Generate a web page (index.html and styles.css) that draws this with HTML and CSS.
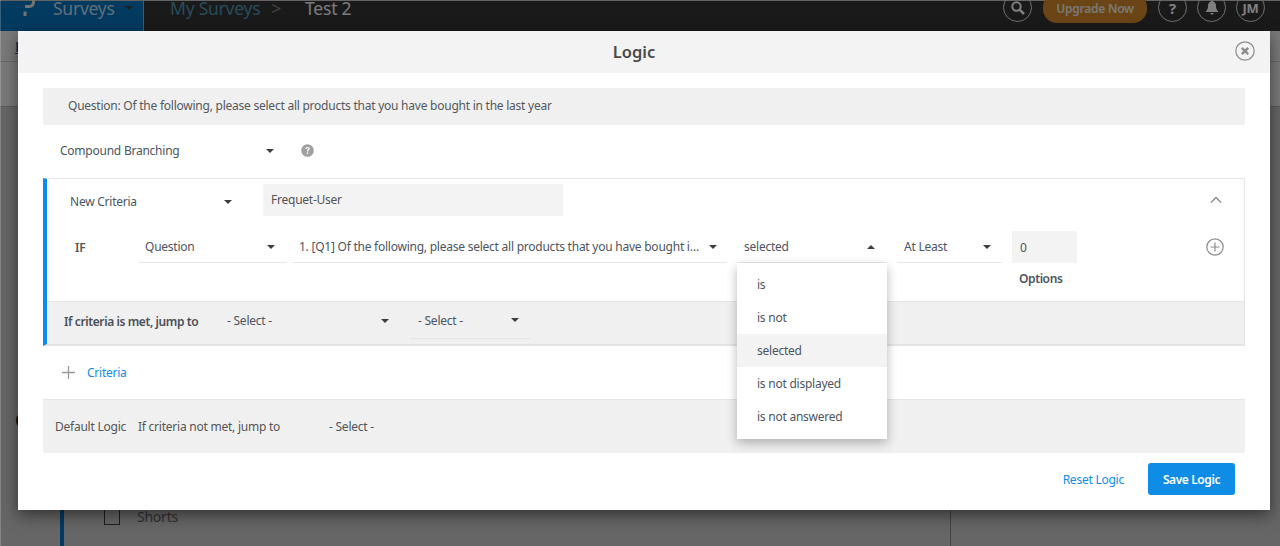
FILE: index.html
```html
<!DOCTYPE html>
<html lang="en">
<head>
<meta charset="utf-8">
<title>Logic</title>
<link rel="stylesheet" href="styles.css">
</head>
<body>
<div class="page">
  <header class="topbar">
    <div class="brand">
      <svg class="brand-mark" width="14" height="18" viewBox="0 0 14 18"><path d="M11.500 -3V2.500C11.500 5.500 9.800 7.500 7 7.500H3" fill="none" stroke="#e8e8e8" stroke-width="3"/><rect x="1.500" y="12.500" width="3" height="4.500" fill="#e8e8e8"/></svg>
      <span class="brand-name">Surveys</span>
      <span class="caret caret-large"></span>
    </div>
    <nav class="crumbs">
      <span class="crumb-link">My Surveys</span>
      <span class="crumb-sep">&gt;</span>
      <span class="crumb-current">Test 2</span>
    </nav>
    <div class="top-actions">
      <span class="round">
        <svg width="16" height="16" viewBox="0 0 16 16"><circle cx="6.500" cy="6.500" r="4.200" fill="none" stroke="#fff" stroke-width="2"/><path d="M9.800 9.800 14 14" stroke="#fff" stroke-width="2.600"/></svg>
      </span>
      <span class="upgrade">Upgrade Now</span>
      <span class="round round-text">?</span>
      <span class="round">
        <svg width="14" height="15" viewBox="0 0 14 15"><path d="M7 .5c.8 0 1.200.5 1.200 1.100C10.300 2.200 11 4 11 6c0 3 1 4.200 2.200 5.300v.7H.8v-.7C2 10.200 3 9 3 6c0-2 .7-3.800 2.800-4.400C5.800 1 6.200.5 7 .5zM5.400 13h3.200c0 1-.7 1.600-1.600 1.600S5.400 14 5.400 13z" fill="#fff"/></svg>
      </span>
      <span class="round round-text round-initials">JM</span>
    </div>
  </header>
  <div class="subnav"><span class="subnav-link">B</span></div>
  <div class="subband"></div>
  <div class="behind">
    <span class="behind-letter">Q</span>
    <div class="behind-card">
      <label class="behind-option"><span class="behind-box"></span>Shorts</label>
    </div>
  </div>

  <div class="scrim"></div>

  <section class="modal">
    <div class="modal-head">
      <h1 class="modal-title">Logic</h1>
      <span class="close-btn">
        <svg width="20" height="20" viewBox="0 0 20 20"><circle cx="10" cy="10" r="9.200" fill="none" stroke="#8d8d8d" stroke-width="1.200"/><path d="M6.800 6.800 13.200 13.200M13.200 6.800 6.800 13.200" stroke="#8d8d8d" stroke-width="2.400"/></svg>
      </span>
    </div>
    <div class="modal-body">
      <div class="question">Question: Of the following, please select all products that you have bought in the last year</div>
      <div class="branch-row">
        <span class="branch-select">Compound Branching<span class="caret"></span></span>
        <svg class="help" width="13" height="13" viewBox="0 0 13 13"><circle cx="6.500" cy="6.500" r="6.300" fill="#a0a0a0"/><path d="M4.300 5c.1-1.400 1-2.100 2.300-2.100s2.200.7 2.200 1.800c0 1.500-1.700 1.500-1.700 2.900H5.800c0-1.900 1.500-1.900 1.500-2.800 0-.4-.3-.7-.8-.7s-.8.300-.9.900zM5.800 8.500h1.400v1.500H5.800z" fill="#fff"/></svg>
      </div>

      <div class="criteria">
        <div class="criteria-main">
          <div class="criteria-head">
            <span class="name-select">New Criteria<span class="caret"></span></span>
            <span class="name-input">Frequet-User</span>
            <svg class="collapse" width="12" height="8" viewBox="0 0 12 8"><path d="M1 6.500 6 1.500l5 5" fill="none" stroke="#8a8a8a" stroke-width="1.300"/></svg>
          </div>
          <div class="if-row">
            <span class="if-label">IF</span>
            <span class="field field-type">Question<span class="caret"></span></span>
            <span class="field field-question"><span class="field-text">1. [Q1] Of the following, please select all products that you have bought in the last year</span><span class="caret"></span></span>
            <div class="op-wrap">
              <span class="field field-op">selected<span class="caret caret-up"></span></span>
              <ul class="menu">
                <li class="menu-item">is</li>
                <li class="menu-item">is not</li>
                <li class="menu-item menu-item-active">selected</li>
                <li class="menu-item">is not displayed</li>
                <li class="menu-item">is not answered</li>
              </ul>
            </div>
            <span class="field field-count">At Least<span class="caret"></span></span>
            <div class="count-col">
              <span class="count-input">0</span>
              <span class="count-label">Options</span>
            </div>
            <svg class="add-round" width="18" height="18" viewBox="0 0 18 18"><circle cx="9" cy="9" r="8.200" fill="none" stroke="#8a8a8a" stroke-width="1.200"/><path d="M9 4.500v9M4.500 9h9" stroke="#8a8a8a" stroke-width="1.200"/></svg>
          </div>
        </div>
        <div class="criteria-foot">
          <span class="jump-label">If criteria is met, jump to</span>
          <span class="jump-select jump-a">- Select -<span class="caret"></span></span>
          <span class="jump-select jump-b">- Select -<span class="caret"></span></span>
        </div>
      </div>

      <div class="add-row">
        <svg width="13" height="13" viewBox="0 0 13 13"><path d="M6.500 0v13M0 6.500h13" stroke="#999" stroke-width="1.300"/></svg>
        <span class="add-link">Criteria</span>
      </div>

      <div class="default-row">
        <span class="default-title">Default Logic</span>
        <span class="default-label">If criteria not met, jump to</span>
        <span class="default-select">- Select -</span>
      </div>

      <div class="actions">
        <span class="reset">Reset Logic</span>
        <span class="save">Save Logic</span>
      </div>
    </div>
  </section>
</div>
</body>
</html>
```
FILE: styles.css
```css
* { box-sizing: border-box; }
html, body { margin: 0; padding: 0; height: 100%; }
body {
  font-family: "Noto Sans", "Open Sans", sans-serif;
  font-size: 12px;
  letter-spacing: -0.24px;
  color: #4a4f57;
  overflow: hidden;
}
.page {
  position: relative;
  width: 1280px;
  height: 546px;
  overflow: hidden;
  background: #fff;
  display: flex;
  flex-direction: column;
}

/* page under the scrim */
.topbar {
  height: 31px;
  flex: none;
  display: flex;
  align-items: stretch;
  background: #343434;
  border-top: 1px solid #c8c8c8;
}
.brand {
  width: 144px;
  flex: none;
  display: flex;
  align-items: center;
  padding: 0 0 17px 22px;
  background: #0674c0;
  border-right: 1px solid #aaa;
  color: #c0dcf0;
  font-size: 17.5px;
}
.brand-mark { flex: none; margin-top: 1px; }
.brand-name { margin-left: 17px; }
.caret-large {
  border-top-color: #ddd;
  border-width: 5px 5px 0;
  margin-left: 10px;
}
.crumbs {
  display: flex;
  align-items: center;
  padding: 0 0 17px 26px;
  font-size: 17.5px;
}
.crumb-link { color: #5096b4; }
.crumb-sep { color: #888; margin-left: 11px; }
.crumb-current { color: #f4f4f4; margin-left: 24px; }
.top-actions {
  margin-left: auto;
  display: flex;
  align-items: flex-start;
  gap: 10px;
  padding-right: 15px;
  margin-top: -8px;
}
.round {
  width: 29px;
  height: 29px;
  border: 1px solid #e0e0e0;
  border-radius: 50%;
  display: flex;
  align-items: center;
  justify-content: center;
  color: #fff;
}
.round-text { font-weight: 700; font-size: 15px; }
.round-initials { font-size: 13px; }
.upgrade {
  width: 104px;
  height: 30px;
  background: #d68a2a;
  border-radius: 14px;
  color: #f4f0e8;
  font-weight: 600;
  display: flex;
  align-items: center;
  justify-content: center;
  margin: 0 1px;
}
.subnav {
  height: 31px;
  flex: none;
  background: #f4f4f4;
  border-bottom: 1px solid #cfcfcf;
  padding: 5px 0 0 15px;
}
.subnav-link {
  color: #0a6aa8;
  text-decoration: underline;
  font-size: 15px;
  font-weight: 700;
}
.subband {
  height: 45px;
  flex: none;
  background: #f4f4f4;
  border-bottom: 1px solid #b8b8b8;
}
.behind {
  flex: 1;
  position: relative;
  background: #cccccc;
  padding-left: 60px;
  display: flex;
}
.behind-letter {
  position: absolute;
  left: 15px;
  top: 301px;
  font-size: 18px;
  font-weight: 700;
  color: #222;
}
.behind-card {
  width: 891px;
  border-left: 4px solid #0674c8;
  border-right: 1px solid #888;
  display: flex;
  flex-direction: column;
  justify-content: flex-end;
  padding: 0 0 20px 40px;
}
.behind-option {
  display: flex;
  align-items: center;
  gap: 17px;
  font-size: 14px;
  color: #646464;
}
.behind-box { width: 16px; height: 16px; border: 1px solid #3c3c3c; }
.scrim {
  position: absolute;
  inset: 0;
  background: rgba(0, 0, 0, 0.5);
  border-left: 1px solid rgba(255, 255, 255, 0.2);
}

/* modal */
.modal {
  position: absolute;
  left: 18px;
  top: 31px;
  width: 1252px;
  height: 479px;
  background: #fff;
  box-shadow: 0 5px 15px rgba(0, 0, 0, 0.5);
  display: flex;
  flex-direction: column;
}
.modal-head {
  height: 42px;
  flex: none;
  background: #f3f3f3;
  display: flex;
  align-items: center;
  justify-content: center;
  position: relative;
  padding: 0 20px 2px 0;
}
.modal-title {
  margin: 0;
  font-size: 16.5px;
  font-weight: 600;
  letter-spacing: 0;
  color: #4a4a4a;
}
.close-btn {
  position: absolute;
  right: 15px;
  top: 10px;
  width: 20px;
  height: 20px;
}
.modal-body {
  flex: 1;
  padding: 15px 25px 0;
  display: flex;
  flex-direction: column;
}
.question {
  height: 37px;
  flex: none;
  background: #f0f0f0;
  padding: 0 0 2px 25px;
  display: flex;
  align-items: center;
  color: #54585e;
}
.branch-row {
  height: 53px;
  flex: none;
  display: flex;
  align-items: center;
  padding: 0 0 2px 17px;
}
.branch-select {
  width: 214px;
  display: flex;
  justify-content: space-between;
  align-items: center;
  color: #4c5561;
}
.help { margin-left: 27px; }
.caret {
  width: 0;
  height: 0;
  flex: none;
  border-style: solid;
  border-width: 4px 4px 0;
  border-color: #3d3d3d transparent transparent;
}
.caret-up { border-width: 0 4px 4px; border-color: transparent transparent #3d3d3d; }

.criteria {
  flex: none;
  height: 168px;
  border-left: 4px solid #0f8ce6;
  border-top: 1px solid #e6e6e6;
  border-right: 1px solid #e6e6e6;
  border-bottom: 2px solid #e4e4e4;
  display: flex;
  flex-direction: column;
}
.criteria-main {
  flex: 1;
  padding: 5px 0 0 0;
  position: relative;
}
.criteria-head {
  display: flex;
  align-items: flex-start;
  height: 32px;
  padding-left: 23px;
}
.name-select {
  width: 162px;
  height: 32px;
  display: flex;
  align-items: center;
  justify-content: space-between;
  padding: 3px 0 0;
  color: #4c5561;
}
.name-input {
  margin-left: 31px;
  width: 300px;
  height: 32px;
  background: #f3f3f3;
  padding: 0 8px 1px;
  display: flex;
  align-items: center;
  color: #555;
}
.collapse { margin-left: auto; margin-right: 22px; margin-top: 12px; }
.if-row {
  display: flex;
  align-items: flex-start;
  margin-top: 15px;
  padding-left: 28px;
  position: relative;
}
.if-label {
  width: 63px;
  height: 32px;
  display: flex;
  align-items: center;
  font-weight: 600;
  color: #555;
}
.field {
  height: 32px;
  display: flex;
  align-items: center;
  justify-content: space-between;
  border-bottom: 1px solid #e8e8e8;
  padding: 0 6px 0 7px;
  color: #4c5561;
  flex: none;
}
.field-type { width: 149px; margin-right: 5px; padding-right: 12px; }
.field-question { width: 435px; margin-right: 10px; gap: 6px; padding-right: 10px; }
.field-text {
  flex: 1;
  min-width: 0;
  white-space: nowrap;
  overflow: hidden;
  text-overflow: ellipsis;
}
.op-wrap { position: relative; margin-right: 10px; }
.field-op { width: 150px; padding-right: 12px; }
.field-count { width: 105px; margin-right: 10px; padding-right: 11px; }
.menu {
  list-style: none;
  margin: 0;
  padding: 5px 0 6px;
  position: absolute;
  left: 0;
  top: 32px;
  width: 150px;
  background: #fff;
  box-shadow: 0 4px 10px rgba(0, 0, 0, 0.28);
  z-index: 5;
}
.menu-item {
  height: 33px;
  padding-left: 20px;
  display: flex;
  align-items: center;
  color: #4c5561;
}
.menu-item-active { background: #f3f3f3; }
.count-col { width: 65px; display: flex; flex-direction: column; }
.count-input {
  height: 32px;
  background: #f3f3f3;
  padding-left: 8px;
  display: flex;
  align-items: center;
  color: #4c5561;
}
.count-label {
  margin-top: 7px;
  padding-left: 7px;
  font-weight: 600;
  letter-spacing: -0.4px;
  color: #4c5561;
}
.add-round { margin-left: 129px; margin-top: 7px; }
.criteria-foot {
  height: 43px;
  flex: none;
  background: #f0f0f0;
  border-top: 1px solid #e6e6e6;
  display: flex;
  align-items: flex-start;
  padding-left: 17px;
}
.jump-label {
  width: 163px;
  height: 38px;
  display: flex;
  align-items: center;
  font-weight: 600;
  letter-spacing: -0.4px;
  color: #4a4f57;
}
.jump-select {
  height: 37px;
  display: flex;
  align-items: center;
  justify-content: space-between;
  color: #4c5561;
}
.jump-a { width: 162px; margin-right: 21px; }
.jump-b {
  width: 120px;
  padding: 0 11px 0 8px;
  border-bottom: 1px solid #e4e4e4;
}
.add-row {
  height: 53px;
  flex: none;
  display: flex;
  align-items: center;
  gap: 12px;
  padding: 0 0 1px 19px;
}
.add-link { color: #0f8ce6; }
.default-row {
  height: 54px;
  flex: none;
  background: #f0f0f0;
  border-top: 1px solid #e6e6e6;
  display: flex;
  align-items: center;
  padding: 0 0 1px 12px;
  color: #555;
}
.default-title { width: 83px; }
.default-label { width: 191px; }
.default-select { color: #4c5561; }
.actions {
  flex: 1;
  display: flex;
  justify-content: flex-end;
  align-items: flex-start;
  padding: 10px 10px 0 0;
}
.reset {
  height: 32px;
  display: flex;
  align-items: center;
  color: #0f8ce6;
  margin-right: 24px;
}
.save {
  width: 87px;
  height: 32px;
  background: #0f8ce6;
  border-radius: 3px;
  color: #fff;
  font-weight: 600;
  letter-spacing: -0.4px;
  display: flex;
  align-items: center;
  justify-content: center;
}
```
